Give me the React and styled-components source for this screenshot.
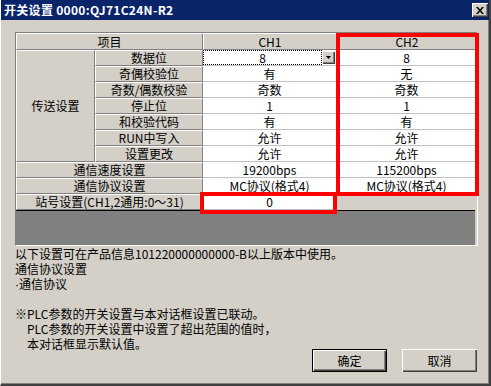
import React from 'react'
import styled, { createGlobalStyle } from 'styled-components'

const GlobalStyle = createGlobalStyle`
  html, body {
    margin: 0;
    padding: 0;
    background: #d4d0c8;
  }
  body {
    font-family: "Noto Sans CJK SC", "DejaVu Sans", sans-serif;
    font-size: 12px;
    color: #000;
  }
  * {
    box-sizing: border-box;
  }
`

const Window = styled.div`
  width: 491px;
  height: 386px;
  background: #d4d0c8;
  border-left: 1px solid #fff;
  border-right: 2px solid #404040;
  border-bottom: 2px solid #404040;
  box-shadow: inset -1px -1px #808080;
  display: flex;
  flex-direction: column;
`

const TitleBar = styled.div`
  height: 20px;
  flex: none;
  background: #0a246a;
  display: flex;
  align-items: center;
  justify-content: space-between;
  padding: 0 1px 0 3px;
`

const Title = styled.span`
  color: #fff;
  font-weight: bold;
  font-size: 12px;
  line-height: 20px;
  letter-spacing: 0.3px;
`

const CloseButton = styled.div`
  width: 16px;
  height: 14px;
  background: #d4d0c8;
  box-shadow: inset 1px 1px #fff, inset -1px -1px #404040, inset -2px -2px #808080;
  display: flex;
  align-items: center;
  justify-content: center;
`

const Body = styled.div`
  flex: 1;
  display: flex;
  flex-direction: column;
  padding: 12px 11px 0 14px;
`

const Frame = styled.div`
  height: 214px;
  border: 1px solid;
  border-color: #808080 #fff #fff #808080;
`

const Grid = styled.div`
  position: relative;
  height: 100%;
  display: grid;
  grid-template-columns: 79px 108px 134px 1fr;
  grid-template-rows: 17px repeat(10, 16px) 1fr;
`

const HeadCell = styled.div`
  grid-column: span ${(p) => p.$span || 1};
  grid-row: span ${(p) => p.$rows || 1};
  background: #d4d0c8;
  border-top: 1px solid #fff;
  border-left: 1px solid #fff;
  border-right: 1px solid #808080;
  border-bottom: 1px solid #808080;
  display: flex;
  align-items: center;
  justify-content: center;
  white-space: nowrap;
  line-height: 14px;
`

const ValueCell = styled.div`
  background: #fff;
  border-right: 1px solid #c0c0c0;
  border-bottom: 1px solid #c0c0c0;
  display: flex;
  align-items: center;
  justify-content: center;
  white-space: nowrap;
  line-height: 14px;
`

const EmptyCell = styled.div`
  background: #d4d0c8;
`

const Band = styled.div`
  grid-column: 1 / -1;
  background: #808080;
  border-top: 1px solid #000;
  margin-right: 2px;
`

const ComboCell = styled.div`
  background: #fff;
  border-bottom: 1px solid #c0c0c0;
  border-right: 1px solid #c0c0c0;
  display: flex;
`

const ComboField = styled.div`
  flex: 1;
  border: 1px dotted #000;
  display: flex;
  align-items: center;
  justify-content: center;
  line-height: 13px;
`

const ComboArrow = styled.div`
  width: 13px;
  margin: 1px 1px 1px 0;
  background: #d4d0c8;
  box-shadow: inset 1px 1px #fff, inset -1px -1px #404040, inset -2px -2px #808080;
  display: flex;
  align-items: center;
  justify-content: center;
`

const RedFrame = styled.div`
  position: absolute;
  grid-column: ${(p) => p.$col};
  grid-row: ${(p) => p.$row};
  top: ${(p) => p.$t}px;
  left: ${(p) => p.$l}px;
  right: ${(p) => p.$r}px;
  bottom: ${(p) => p.$b}px;
  border: 4px solid #ff0000;
  pointer-events: none;
`

const Notes = styled.div`
  height: 103px;
  line-height: 15px;
  white-space: nowrap;
`

const NoteLine = styled.div`
  height: 15px;
  padding-left: ${(p) => (p.$indent ? 12 : 0)}px;
`

const Dot = styled.span`
  font-family: "Liberation Sans", sans-serif;
`

const ButtonRow = styled.div`
  display: flex;
  justify-content: flex-end;
  gap: 15px;
  padding-right: 1px;
`

const Button = styled.div`
  width: 75px;
  height: 23px;
  background: #d4d0c8;
  display: flex;
  align-items: center;
  justify-content: center;
  border: ${(p) => (p.$default ? '1px solid #000' : 'none')};
  box-shadow: inset 1px 1px #fff, inset -1px -1px #404040, inset -2px -2px #808080;
`

const settings = [
  ['奇偶校验位', '有', '无'],
  ['奇数/偶数校验', '奇数', '奇数'],
  ['停止位', '1', '1'],
  ['和校验代码', '有', '有'],
  ['RUN中写入', '允许', '允许'],
  ['设置更改', '允许', '允许'],
]

const commRows = [
  ['通信速度设置', '19200bps', '115200bps'],
  ['通信协议设置', 'MC协议(格式4)', 'MC协议(格式4)'],
]

const App = () => {
  return (
    <>
      <GlobalStyle />
      <Window>
        <TitleBar>
          <Title>开关设置 0000:QJ71C24N-R2</Title>
          <CloseButton>
            <svg width="8" height="7" viewBox="0 0 8 7">
              <path d="M0 0 L2 0 L4 2.5 L6 0 L8 0 L5 3.5 L8 7 L6 7 L4 4.5 L2 7 L0 7 L3 3.5 Z" fill="#000" />
            </svg>
          </CloseButton>
        </TitleBar>
        <Body>
          <Frame>
            <Grid>
              <HeadCell $span={2}>项目</HeadCell>
              <HeadCell>CH1</HeadCell>
              <HeadCell>CH2</HeadCell>

              <HeadCell $rows={7}>传送设置</HeadCell>
              <HeadCell>数据位</HeadCell>
              <ComboCell>
                <ComboField>8</ComboField>
                <ComboArrow>
                  <svg width="5" height="3" viewBox="0 0 5 3">
                    <path d="M0 0 H5 L2.5 3 Z" fill="#000" />
                  </svg>
                </ComboArrow>
              </ComboCell>
              <ValueCell>8</ValueCell>

              {settings.map(([label, ch1, ch2]) => (
                <React.Fragment key={label}>
                  <HeadCell>{label}</HeadCell>
                  <ValueCell>{ch1}</ValueCell>
                  <ValueCell>{ch2}</ValueCell>
                </React.Fragment>
              ))}

              {commRows.map(([label, ch1, ch2]) => (
                <React.Fragment key={label}>
                  <HeadCell $span={2}>{label}</HeadCell>
                  <ValueCell>{ch1}</ValueCell>
                  <ValueCell>{ch2}</ValueCell>
                </React.Fragment>
              ))}

              <HeadCell $span={2}>站号设置(CH1,2通用:0～31)</HeadCell>
              <ValueCell>0</ValueCell>
              <EmptyCell />

              <Band />

              <RedFrame $col="4 / 5" $row="1 / 11" $t={0} $l={-1} $r={-2} $b={-2} />
              <RedFrame $col="3 / 4" $row="11 / 12" $t={-2} $l={-3} $r={0} $b={-4} />
            </Grid>
          </Frame>
          <Notes>
            <NoteLine>以下设置可在产品信息101220000000000-B以上版本中使用。</NoteLine>
            <NoteLine>通信协议设置</NoteLine>
            <NoteLine><Dot>·</Dot>通信协议</NoteLine>
            <NoteLine />
            <NoteLine>※PLC参数的开关设置与本对话框设置已联动。</NoteLine>
            <NoteLine $indent>PLC参数的开关设置中设置了超出范围的值时，</NoteLine>
            <NoteLine $indent>本对话框显示默认值。</NoteLine>
          </Notes>
          <ButtonRow>
            <Button $default>确定</Button>
            <Button>取消</Button>
          </ButtonRow>
        </Body>
      </Window>
    </>
  )
}

export default App
